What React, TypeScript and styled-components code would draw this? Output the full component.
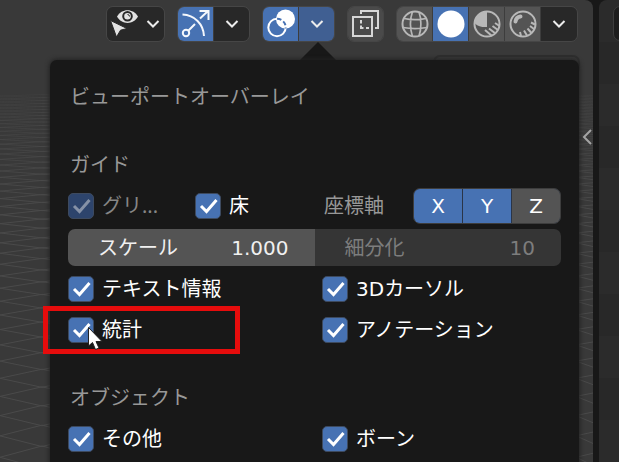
import React, { useState } from "react";
import styled, { createGlobalStyle, css } from "styled-components";

const Global = createGlobalStyle`
  *, *::before, *::after { box-sizing: border-box; }
  body { margin: 0; background: #181818; }
  body, button, input {
    font-family: "DejaVu Sans", "Noto Sans CJK JP", sans-serif;
    font-size: 20px;
    line-height: 24px;
  }
  button { padding: 0; border: 0; color: inherit; cursor: default; }
`;

const Screen = styled.div`
  display: flex;
  gap: 6px;
  height: 100vh;
  overflow: hidden;
  background: #181818;
`;

const Viewport = styled.main`
  position: relative;
  flex: 1;
  min-width: 0;
  overflow: hidden;
  border-radius: 0 8px 0 0;
  background: #393939;
`;

const SidePanel = styled.aside`
  flex: 0 0 20px;
  border-radius: 8px 0 0 0;
  padding: 6px 0 0 14px;
  overflow: hidden;
  background: repeating-linear-gradient(#2b2b2b 0 42px, #282828 42px 84px);
`;

const SideField = styled.div`
  width: 60px;
  height: 35px;
  border: 1px solid #3d3d3d;
  border-radius: 7px;
  background: #1d1d1d;
`;

const FloorLines = styled.svg`
  position: absolute;
  inset: 0;
  width: 100%;
  height: 100%;
`;

const Toolbar = styled.header`
  position: relative;
  display: flex;
  justify-content: flex-end;
  gap: 12px;
  padding: 6px 15px 0;
`;

const Group = styled.div<{ $seamless?: boolean }>`
  display: flex;
  gap: ${(p) => (p.$seamless ? 0 : 1)}px;
  height: 36px;
  border: 1px solid #464646;
  border-radius: 7px;
  overflow: hidden;
  background: #3d3d3d;
`;

type Tone = "dark" | "soft" | "grey" | "blue" | "dim";
const tones: Record<Tone, string> = {
  dark: "#282828",
  soft: "#4a4a4a",
  grey: "#545454",
  blue: "#4772b3",
  dim: "#405f92",
};
const widths = { narrow: 22, normal: 35, wide: 36 };

const ToolButton = styled.button<{ $tone: Tone; $size?: keyof typeof widths }>`
  display: grid;
  place-items: center;
  width: ${(p) => widths[p.$size ?? "normal"]}px;
  height: 34px;
  background: ${(p) => tones[p.$tone]};
`;

const PopoverWrap = styled.div`
  position: relative;
  padding: 18px 14px 0 50px;
`;

const RegionEdge = styled.div`
  position: absolute;
  top: 13px;
  right: 13px;
  width: 147px;
  height: 20px;
  border: 2px solid #2e2e2e;
  border-radius: 7px;
`;

const Pointer = styled.svg`
  position: absolute;
  top: 0;
  right: 256px;
  width: 38px;
  height: 19px;
`;

const Popover = styled.section`
  position: relative;
  display: flex;
  flex-direction: column;
  gap: 32px;
  min-height: 100vh;
  padding: 19px 18px;
  border-radius: 7px;
  background: #181818;
  color: #ffffff;
  box-shadow: 0 0 4px 1px #232323;
`;

const Section = styled.div`
  display: flex;
  flex-direction: column;
  gap: 5px;
`;

const Heading = styled.h2`
  margin: 0;
  height: 36px;
  padding-left: 2px;
  font-size: 20px;
  font-weight: 400;
  line-height: 36px;
  color: #989898;
`;

const Grid = styled.div`
  display: grid;
  grid-template-columns: repeat(4, 1fr);
  column-gap: 15px;
`;

const Cell = styled.div<{ $span: number }>`
  position: relative;
  grid-column: span ${(p) => p.$span};
  display: flex;
  align-items: center;
  justify-content: space-between;
  min-width: 0;
  height: 36px;
  white-space: nowrap;
`;

const CheckLabel = styled.label<{ $muted?: boolean }>`
  display: flex;
  align-items: center;
  gap: 8px;
  ${(p) =>
    p.$muted &&
    css`
      color: #868686;
      font-family: "Noto Sans", "Noto Sans CJK JP", sans-serif;
    `}
`;

const CheckBox = styled.span`
  display: grid;
  flex: none;
  width: 26px;
  height: 26px;

  & > * {
    grid-area: 1 / 1;
  }
  svg {
    pointer-events: none;
  }
`;

const CheckInput = styled.input<{ $muted?: boolean }>`
  appearance: none;
  width: 26px;
  height: 26px;
  margin: 0;
  border: 1px solid #3d4a5f;
  border-radius: 5px;
  background: ${(p) => (p.$muted ? "#2d446c" : "#4772b3")};

  &:not(:checked) {
    background: #545454;
  }
  &:not(:checked) + svg {
    visibility: hidden;
  }
`;

const AxisLabel = styled.span`
  padding-left: 2px;
  color: #989898;
`;

const AxisGroup = styled.div`
  display: grid;
  grid-template-columns: repeat(3, 1fr);
  gap: 1px;
  width: 148px;
  height: 36px;
  border: 1px solid #3d3d3d;
  border-radius: 7px;
  overflow: hidden;
  background: #2a3548;
`;

const AxisButton = styled.button<{ $on: boolean }>`
  background: ${(p) => (p.$on ? "#4772b3" : "#545454")};
`;

const Fields = styled.div`
  display: grid;
  grid-template-columns: 1fr 1fr;
  height: 37px;
  border-radius: 7px;
  overflow: hidden;
`;

const Field = styled.label<{ $muted?: boolean }>`
  display: flex;
  align-items: center;
  justify-content: space-between;
  min-width: 0;
  padding: 0 26px 0 30px;
  white-space: nowrap;
  background: ${(p) => (p.$muted ? "#353535" : "#545454")};
  color: ${(p) => (p.$muted ? "#7d7d7d" : "#f0f0f0")};
`;

const FieldInput = styled.input`
  width: 80px;
  padding: 0;
  border: 0;
  outline: 0;
  background: none;
  color: inherit;
  text-align: right;
`;

const Highlight = styled.div`
  position: absolute;
  top: -6px;
  left: -25px;
  width: 197px;
  height: 48px;
  border: 5px solid #e60c0c;
  pointer-events: none;
`;

const Cursor = styled.svg`
  position: absolute;
  top: 14px;
  left: 19px;
  width: 17px;
  height: 26px;
  pointer-events: none;
`;

const PanelToggle = styled.button`
  position: absolute;
  top: 126px;
  right: 0;
  width: 12px;
  height: 22px;
  background: none;
`;

const Chevron = () => (
  <svg width="14" height="10" viewBox="0 0 14 10" fill="none" stroke="#ececec" strokeWidth="2">
    <path d="M1.5 2 7 7.5 12.5 2" />
  </svg>
);

const VisibilityIcon = () => (
  <svg width="32" height="32" viewBox="0 0 32 32">
    <path d="M8 8.5C12.500 0 24.500 0 29 8.500C24.500 17 12.500 17 8 8.500Z" fill="#e2e2e2" />
    <circle cx="18.500" cy="8.300" r="4.300" fill="#e2e2e2" stroke="#282828" strokeWidth="2" />
    <path d="M18.500 6.500A2 2 0 0 1 20.500 8.500" stroke="#282828" fill="none" />
    <path d="M1.500 12.500 18 20.500 11.500 22.200 7.500 29Z" fill="#e2e2e2" stroke="#282828" strokeWidth="1" />
  </svg>
);

const GizmoIcon = () => (
  <svg width="32" height="32" viewBox="0 0 32 32" fill="none" stroke="#f4f7fc" strokeWidth="2">
    <path d="M2.500 6.500C14.500 7 23.500 16 24 28" />
    <circle cx="6" cy="25" r="3.200" />
    <path d="M8.500 22.500 15 16M20 10.500 28 3M19.500 3H28.500V12" />
  </svg>
);

const OverlayIcon = () => (
  <svg width="32" height="32" viewBox="0 0 32 32" fill="none">
    <clipPath id="disc">
      <circle cx="20.500" cy="11" r="9.500" />
    </clipPath>
    <circle cx="20.500" cy="11" r="9.500" fill="#fff" />
    <circle cx="12" cy="19.500" r="8.700" stroke="#fff" strokeWidth="2" />
    <circle cx="12" cy="19.500" r="8.700" stroke="#4772b3" strokeWidth="2" strokeDasharray="4.500 2.300" clipPath="url(#disc)" />
  </svg>
);

const XrayIcon = () => (
  <svg width="32" height="32" viewBox="0 0 32 32" fill="none" stroke="#d6d6d6" strokeWidth="2">
    <path d="M11 6V3H28V20H25M3 9H22V28H3Z" />
    <path d="M11 12V15.500M11 17.500V20H13.500M16 20H19" />
  </svg>
);

const WireIcon = () => (
  <svg width="30" height="30" viewBox="0 0 30 30" fill="none" stroke="#b8b8b8" strokeWidth="1.700">
    <circle cx="15" cy="15" r="12.500" strokeWidth="2" />
    <path d="M12.500 2.500C10 10 10 20 12.500 27.500M19 3C21.500 10 21.500 20 19 27M4 9.500C11 11 19 11 26 9.500M3 18.500C11 20 19 20 27 18.500" />
  </svg>
);

const SolidIcon = () => (
  <svg width="30" height="30" viewBox="0 0 30 30">
    <circle cx="15" cy="15" r="13.500" fill="#fff" />
  </svg>
);

const MaterialIcon = () => (
  <svg width="30" height="30" viewBox="0 0 30 30" fill="none" stroke="#b8b8b8" strokeWidth="2">
    <path d="M15 2.500V18C11 18.500 6 17.500 3 14.500C2 8 8 2.500 15 2.500Z" fill="#b8b8b8" stroke="none" />
    <circle cx="15" cy="15" r="12.500" />
    <path d="M17 19.500 23.500 24.500M13 21 20 27M20.500 17 26 21M23 14 27.500 17" />
  </svg>
);

const RenderedIcon = () => (
  <svg width="30" height="30" viewBox="0 0 30 30" fill="none" stroke="#b8b8b8" strokeWidth="2">
    <circle cx="15" cy="15" r="12.500" />
    <path d="M7.500 12.500C8 9.500 10 7.800 12.500 7.500" strokeWidth="4" strokeLinecap="round" />
    <path d="M23 13.500 27 15.500M22 17 26 20M19.500 19.500 23.500 24M16 21.500 19 26.500M12 23 13 27" />
  </svg>
);

type CheckProps = { text: string; muted?: boolean };

function Check({ text, muted }: CheckProps) {
  return (
    <CheckLabel $muted={muted}>
      <CheckBox>
        <CheckInput type="checkbox" defaultChecked $muted={muted} />
        <svg width="26" height="26" viewBox="0 0 26 26" fill="none">
          <path d="M6 13 11.500 18.500 21.500 7" stroke={muted ? "#8591a6" : "#ffffff"} strokeWidth="3" />
        </svg>
      </CheckBox>
      {text}
    </CheckLabel>
  );
}

// Floor grid seen in perspective: the spacing widens towards the viewer.
function floorPaths() {
  const rows: { d: string; opacity: number }[] = [];
  for (let y = 96; y < 480; ) {
    const step = Math.max(3, (y - 60) * 0.057);
    const half = step / 2;
    rows.push({
      d: `M0 ${y}L42 ${y + half}L84 ${y}M0 ${y}L42 ${y - half}L84 ${y}M576 ${y}L600 ${y + half}M576 ${y}L600 ${y - half / 2}`,
      opacity: Math.min(1, (y - 50) / 160),
    });
    y += step;
  }
  return rows;
}
const floor = floorPaths();

export default function App() {
  const [axes, setAxes] = useState({ X: true, Y: true, Z: false });

  return (
    <>
      <Global />
      <Screen>
        <Viewport>
          <FloorLines stroke="#4a4a4a" strokeWidth="1" fill="none" aria-hidden="true">
            {floor.map((row) => (
              <path key={row.d} d={row.d} opacity={row.opacity} />
            ))}
          </FloorLines>
          <Toolbar>
            <Group $seamless>
              <ToolButton $tone="dark" aria-label="表示とセレクト"><VisibilityIcon /></ToolButton>
              <ToolButton $tone="dark" $size="narrow" aria-label="表示の設定"><Chevron /></ToolButton>
            </Group>
            <Group>
              <ToolButton $tone="blue" aria-label="ギズモ"><GizmoIcon /></ToolButton>
              <ToolButton $tone="dark" aria-label="ギズモの設定"><Chevron /></ToolButton>
            </Group>
            <Group>
              <ToolButton $tone="blue" aria-label="オーバーレイ"><OverlayIcon /></ToolButton>
              <ToolButton $tone="dim" aria-label="オーバーレイの設定"><Chevron /></ToolButton>
            </Group>
            <Group>
              <ToolButton $tone="soft" aria-label="透過"><XrayIcon /></ToolButton>
            </Group>
            <Group>
              <ToolButton $tone="grey" aria-label="ワイヤーフレーム"><WireIcon /></ToolButton>
              <ToolButton $tone="blue" aria-label="ソリッド"><SolidIcon /></ToolButton>
              <ToolButton $tone="grey" aria-label="マテリアルプレビュー"><MaterialIcon /></ToolButton>
              <ToolButton $tone="grey" aria-label="レンダー"><RenderedIcon /></ToolButton>
              <ToolButton $tone="dark" $size="wide" aria-label="シェーディングの設定"><Chevron /></ToolButton>
            </Group>
          </Toolbar>
          <PopoverWrap>
            <RegionEdge />
            <Pointer viewBox="0 0 38 19"><path d="M0 19 19 0 38 19Z" fill="#181818" /></Pointer>
            <Popover>
              <Heading>ビューポートオーバーレイ</Heading>
              <Section>
                <Heading>ガイド</Heading>
                <Grid>
                  <Cell $span={1}><Check text="グリ..." muted /></Cell>
                  <Cell $span={1}><Check text="床" /></Cell>
                  <Cell $span={2}>
                    <AxisLabel>座標軸</AxisLabel>
                    <AxisGroup>
                      {(["X", "Y", "Z"] as const).map((a) => (
                        <AxisButton
                          key={a}
                          $on={axes[a]}
                          aria-pressed={axes[a]}
                          onClick={() => setAxes({ ...axes, [a]: !axes[a] })}
                        >
                          {a}
                        </AxisButton>
                      ))}
                    </AxisGroup>
                  </Cell>
                </Grid>
                <Fields>
                  <Field>スケール<FieldInput defaultValue="1.000" /></Field>
                  <Field $muted>細分化<FieldInput defaultValue="10" readOnly /></Field>
                </Fields>
                <Grid>
                  <Cell $span={2}><Check text="テキスト情報" /></Cell>
                  <Cell $span={2}><Check text="3Dカーソル" /></Cell>
                </Grid>
                <Grid>
                  <Cell $span={2}>
                    <Check text="統計" />
                    <Highlight />
                    <Cursor viewBox="0 0 17 26">
                      <path d="M1.500 1.500V20L5.500 16.500 8.500 23.500 12 22 9 15.500H15Z" fill="#fff" stroke="#222" />
                    </Cursor>
                  </Cell>
                  <Cell $span={2}><Check text="アノテーション" /></Cell>
                </Grid>
              </Section>
              <Section>
                <Heading>オブジェクト</Heading>
                <Grid>
                  <Cell $span={2}><Check text="その他" /></Cell>
                  <Cell $span={2}><Check text="ボーン" /></Cell>
                </Grid>
              </Section>
            </Popover>
          </PopoverWrap>
          <PanelToggle aria-label="サイドバー">
            <svg width="12" height="22" viewBox="0 0 12 22" fill="none" stroke="#a4a4a4" strokeWidth="2">
              <path d="M10 4 3 11 10 18" />
            </svg>
          </PanelToggle>
        </Viewport>
        <SidePanel><SideField /></SidePanel>
      </Screen>
    </>
  );
}
